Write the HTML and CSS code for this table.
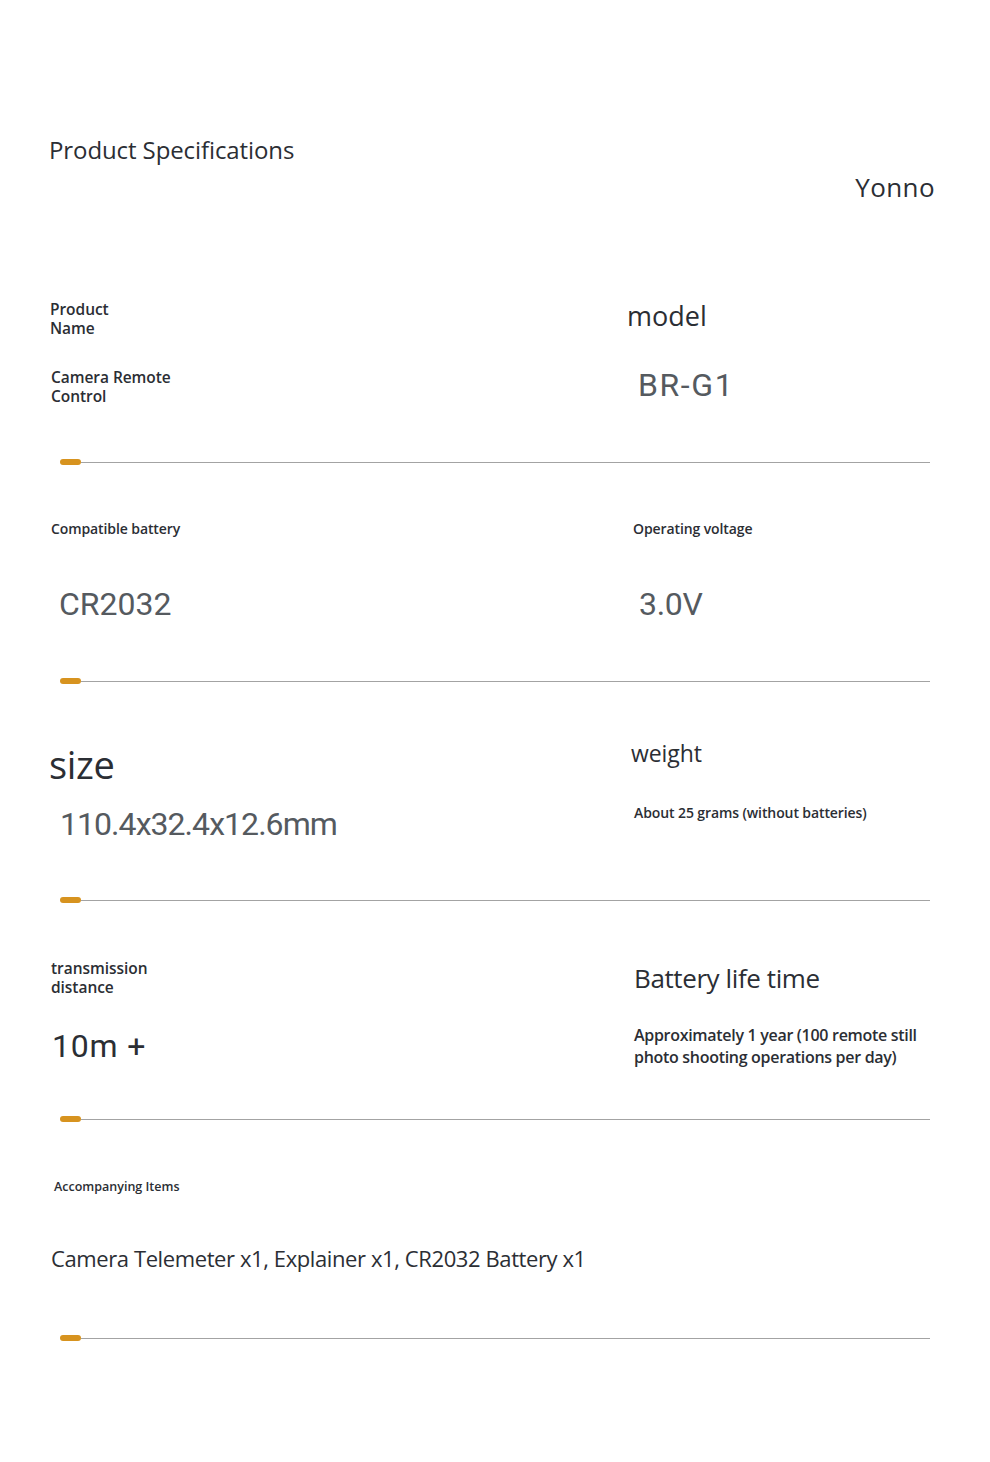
FILE: index.html
```html
<!DOCTYPE html>
<html lang="en">
<head>
<meta charset="utf-8">
<title>Product Specifications</title>
<link rel="stylesheet" href="styles.css">
</head>
<body>
<div class="page">
  <header class="header">
    <h1 class="title">Product Specifications</h1>
    <div class="brand">Yonno</div>
  </header>

  <section class="spec spec-1">
    <div class="col col-left">
      <div class="label-md">Product<br>Name</div>
      <div class="label-md name-value">Camera Remote<br>Control</div>
    </div>
    <div class="col col-right">
      <div class="head-md model">model</div>
      <div class="value model-value">BR-G1</div>
    </div>
  </section>
  <div class="divider"><span class="pill"></span><span class="rule"></span></div>

  <section class="spec spec-2">
    <div class="col col-left">
      <div class="label-sm battery-label">Compatible battery</div>
      <div class="value battery-value">CR2032</div>
    </div>
    <div class="col col-right">
      <div class="label-sm voltage-label">Operating voltage</div>
      <div class="value voltage-value">3.0V</div>
    </div>
  </section>
  <div class="divider"><span class="pill"></span><span class="rule"></span></div>

  <section class="spec spec-3">
    <div class="col col-left">
      <div class="head-lg size-label">size</div>
      <div class="value size-value">110.4x32.4x12.6mm</div>
    </div>
    <div class="col col-right">
      <div class="head-sm weight-label">weight</div>
      <div class="label-sm weight-value">About 25 grams (without batteries)</div>
    </div>
  </section>
  <div class="divider"><span class="pill"></span><span class="rule"></span></div>

  <section class="spec spec-4">
    <div class="col col-left">
      <div class="label-md distance-label">transmission<br>distance</div>
      <div class="value dark distance-value">10m +</div>
    </div>
    <div class="col col-right">
      <div class="head-md life-label">Battery life time</div>
      <div class="text-md life-value">Approximately 1 year (100 remote still<br>photo shooting operations per day)</div>
    </div>
  </section>
  <div class="divider"><span class="pill"></span><span class="rule"></span></div>

  <section class="spec spec-5">
    <div class="col col-full">
      <div class="label-xs items-label">Accompanying Items</div>
      <div class="items-value">Camera Telemeter x1, Explainer x1, CR2032 Battery x1</div>
    </div>
  </section>
  <div class="divider"><span class="pill"></span><span class="rule"></span></div>
</div>
</body>
</html>
```

FILE: styles.css
```css
* {
  box-sizing: border-box;
  margin: 0;
  padding: 0;
}

html, body {
  background: #ffffff;
}

body {
  font-family: "Open Sans", "Noto Sans", sans-serif;
  color: #2b2e34;
  width: 990px;
  min-height: 1462px;
}

.page {
  width: 990px;
  padding-bottom: 121px;
}

.header {
  height: 246px;
  display: flex;
  flex-direction: column;
  padding: 135px 55px 0 49px;
}

.title {
  font-weight: 400;
  font-size: 24px;
  line-height: 30px;
  letter-spacing: -0.1px;
  color: #2b2e34;
}

.brand {
  align-self: flex-end;
  font-size: 26px;
  line-height: 32px;
  margin-top: 6px;
  letter-spacing: 0.4px;
  color: #2b2e34;
}

.spec {
  height: 213px;
  display: grid;
  grid-template-columns: 578px 1fr;
}

.col {
  display: flex;
  flex-direction: column;
  align-items: flex-start;
}

.col-full {
  grid-column: 1 / -1;
}

.divider {
  height: 6px;
  display: flex;
  align-items: center;
  padding: 0 60px 0 60px;
}

.pill {
  width: 21px;
  height: 6px;
  border-radius: 3px;
  background: #d7931f;
  flex: none;
}

.rule {
  flex: 1;
  height: 1px;
  background: #a3a3a3;
}

/* text styles */
.label-md {
  font-size: 15.5px;
  line-height: 19px;
  font-weight: 600;
  letter-spacing: -0.05px;
}

.label-sm {
  font-size: 14px;
  line-height: 18px;
  font-weight: 600;
  letter-spacing: -0.1px;
}

.label-xs {
  font-size: 12.5px;
  line-height: 16px;
  font-weight: 600;
  letter-spacing: 0;
}

.head-md {
  font-size: 26px;
  line-height: 32px;
  letter-spacing: -0.3px;
}

.head-sm {
  font-size: 23px;
  line-height: 26px;
  letter-spacing: -0.1px;
}

.head-lg {
  font-size: 38px;
  line-height: 42px;
  letter-spacing: -0.3px;
}

.text-md {
  font-size: 16px;
  line-height: 22px;
  font-weight: 600;
  letter-spacing: -0.3px;
}

.value {
  font-family: Roboto, "Noto Sans", sans-serif;
  font-size: 32px;
  line-height: 38px;
  color: #555a5f;
  font-weight: 400;
}

.value.dark {
  color: #2b2e34;
}

/* section 1 */
.spec-1 .col-left { padding: 54px 0 0 50px; }
.name-value { margin-top: 30px; padding-left: 1px; }
.spec-1 .col-right { padding: 54px 0 0 49px; }
.model { font-size: 27px; letter-spacing: 0; }
.model-value { margin-top: 34px; margin-left: 11px; letter-spacing: 1.6px; }

/* section 2 */
.spec-2 .col-left { padding: 55px 0 0 51px; }
.battery-value { margin-top: 47px; margin-left: 8px; }
.spec-2 .col-right { padding: 55px 0 0 55px; }
.voltage-value { margin-top: 47px; margin-left: 6px; letter-spacing: -0.3px; }

/* section 3 */
.spec-3 .col-left { padding: 59px 0 0 49px; }
.size-value { margin-top: 20px; margin-left: 11px; letter-spacing: -0.95px; }
.spec-3 .col-right { padding: 56px 0 0 53px; }
.weight-value { margin-top: 38px; margin-left: 3px; }

/* section 4 */
.spec-4 .col-left { padding: 56px 0 0 51px; }
.distance-value { margin-top: 30px; margin-left: 1px; letter-spacing: 0.8px; }
.spec-4 .col-right { padding: 59px 0 0 56px; }
.life-label { letter-spacing: -0.4px; }
.life-value { margin-top: 30px; margin-left: 0; }

/* section 5 */
.spec-5 .col-full { padding: 57px 0 0 54px; }
.items-value {
  margin-top: 49px;
  margin-left: -3px;
  font-size: 22px;
  line-height: 28px;
  letter-spacing: -0.4px;
}
```
